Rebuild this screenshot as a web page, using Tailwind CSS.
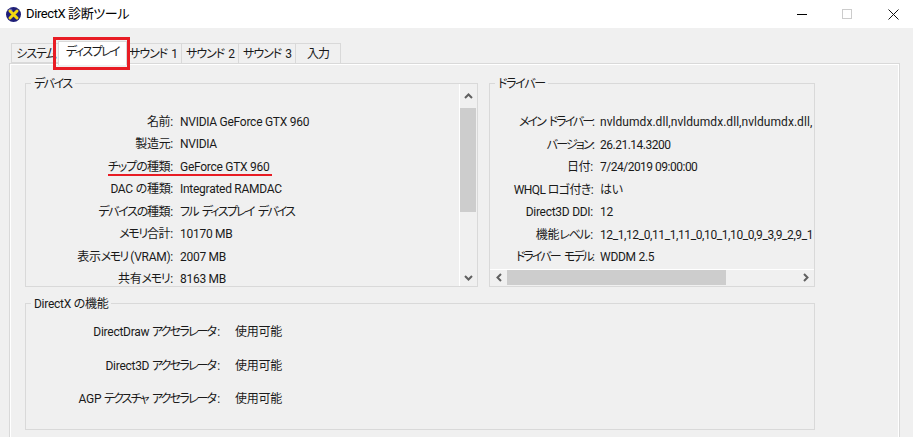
<!DOCTYPE html>
<html lang="ja">
<head>
<meta charset="UTF-8">
<title>DirectX 診断ツール</title>
<script src="https://cdn.jsdelivr.net/npm/@tailwindcss/browser@4"></script>
</head>
<body class="w-[913px] h-[437px] overflow-hidden bg-[#f0f0f0] text-[12px] leading-[16px] tracking-[-0.27px] text-[#1a1a1a] font-['Roboto','Noto_Sans_CJK_JP',sans-serif] [font-feature-settings:'palt']">

<!-- title bar -->
<div class="h-[28px] bg-white flex items-center relative">
  <svg class="ml-[5px] w-[17px] h-[17px]" viewBox="0 0 17 17">
    <circle cx="8.5" cy="8.5" r="7.5" fill="#1f1f78"/>
    <circle cx="5.5" cy="4.5" r="2" fill="#5a5ab8"/>
    <path d="M5 5 L12 12 M12 5 L5 12" stroke="#f2d90f" stroke-width="3" stroke-linecap="round"/>
  </svg>
  <span class="ml-[4px] text-[13px] tracking-[-0.4px] text-black whitespace-nowrap">DirectX 診断ツール</span>
  <div class="ml-auto flex items-center">
    <div class="w-[10px] h-px bg-black mr-[35px]"></div>
    <div class="w-[10px] h-[10px] border border-[#cccccc] mr-[36px]"></div>
    <svg class="w-[11px] h-[11px] mr-[14px]" viewBox="0 0 11 11"><path d="M0.5 0.5 L10.5 10.5 M10.5 0.5 L0.5 10.5" stroke="#111" stroke-width="1"/></svg>
  </div>
</div>

<!-- tabs -->
<div class="h-[35px] pl-[11px] pt-[15px] flex items-start relative whitespace-nowrap tracking-[-1px] [word-spacing:2px]">
  <div class="w-[47px] h-[20px] pt-px pl-[2px] border border-r-0 border-[#d9d9d9] flex items-center justify-center">システム</div>
  <div class="w-[69px] h-[24px] -mt-[2px] pb-[3px] tracking-[-1.6px] bg-white border-x border-t border-[#d9d9d9] flex items-center justify-center relative z-10">ディスプレイ</div>
  <div class="w-[54px] h-[20px] pt-px pr-[2px] border-t border-[#d9d9d9] flex items-center justify-center">サウンド 1</div>
  <div class="w-[57px] h-[20px] pt-px border-t border-l border-[#d9d9d9] flex items-center justify-center">サウンド 2</div>
  <div class="w-[57px] h-[20px] pt-px border-t border-l border-[#d9d9d9] flex items-center justify-center">サウンド 3</div>
  <div class="w-[46px] h-[20px] pt-px border-t border-x border-[#d9d9d9] flex items-center justify-center">入力</div>
  <div class="absolute left-[53px] top-[9px] w-[77px] h-[33px] border-[3px] border-[#e81c24] z-20"></div>
</div>

<!-- tab panel -->
<div class="ml-[9px] w-[891px] h-[374px] border border-[#d9d9d9] border-b-0">
  <div class="h-full border-l border-t border-r border-white pl-[14px] pt-[18px]">

    <div class="flex items-start gap-[11px]">
      <!-- device -->
      <div class="w-[453px] h-[204px] border border-[#d9d9d9] relative">
        <span class="absolute left-[5px] -top-[8px] bg-[#f0f0f0] px-[3px] tracking-[-1.5px]">デバイス</span>
        <div class="h-full flex">
          <div class="flex-1 h-[202px] overflow-hidden pt-[26.5px]">
            <div class="flex h-[22.5px] items-center"><span class="w-[147px] text-right">名前:</span><span class="ml-[7px]">NVIDIA GeForce GTX 960</span></div>
            <div class="flex h-[22.5px] items-center"><span class="w-[147px] text-right">製造元:</span><span class="ml-[7px]">NVIDIA</span></div>
            <div class="flex h-[22.5px] items-center relative"><span class="w-[147px] text-right"><span class="tracking-[-1px]">チップの</span>種類:</span><span class="ml-[7px]">GeForce GTX 960</span>
              <div class="absolute left-[82px] top-[18px] w-[164px] h-[2px] bg-[#e81c24]"></div></div>
            <div class="flex h-[22.5px] items-center"><span class="w-[147px] text-right">DAC の種類:</span><span class="ml-[7px]">Integrated RAMDAC</span></div>
            <div class="flex h-[22.5px] items-center"><span class="w-[147px] text-right"><span class="tracking-[-1.3px]">デバイスの</span>種類:</span><span class="ml-[7px] tracking-[-1.8px] [word-spacing:3px]">フル ディスプレイ デバイス</span></div>
            <div class="flex h-[22.5px] items-center"><span class="w-[147px] text-right"><span class="tracking-[-1.3px]">メモリ</span>合計:</span><span class="ml-[7px]">10170 MB</span></div>
            <div class="flex h-[22.5px] items-center"><span class="w-[147px] text-right">表示<span class="tracking-[-1.6px]">メモリ</span> (VRAM):</span><span class="ml-[7px]">2007 MB</span></div>
            <div class="flex h-[22.5px] items-center"><span class="w-[147px] text-right">共有<span class="tracking-[-1.3px] pr-px">メモリ</span>:</span><span class="ml-[7px]">8163 MB</span></div>
          </div>
          <!-- vertical scrollbar -->
          <div class="w-[17px] mr-px border-l border-white flex flex-col">
            <div class="h-[24px] flex items-center justify-center">
              <svg class="w-[9px] h-[6px]" viewBox="0 0 9 6"><path d="M1 5 L4.5 1.5 L8 5" fill="none" stroke="#606060" stroke-width="2"/></svg>
            </div>
            <div class="h-[104px] bg-[#cdcdcd]"></div>
            <div class="flex-1"></div>
            <div class="h-[17px] flex items-center justify-center">
              <svg class="w-[9px] h-[6px]" viewBox="0 0 9 6"><path d="M1 1 L4.5 4.5 L8 1" fill="none" stroke="#606060" stroke-width="2"/></svg>
            </div>
          </div>
        </div>
      </div>

      <!-- driver -->
      <div class="w-[326px] h-[204px] border border-[#d9d9d9] relative">
        <span class="absolute left-[5px] -top-[8px] bg-[#f0f0f0] px-[3px] tracking-[-1.3px]">ドライバー</span>
        <div class="h-[185px] overflow-hidden pt-[27.2px]">
          <div class="flex h-[22.5px] items-center whitespace-nowrap"><span class="w-[103px] shrink-0 text-right tracking-[-2px] [word-spacing:3px]">メイン ドライバー:</span><span class="ml-[7px] tracking-[0.05px]">nvldumdx.dll,nvldumdx.dll,nvldumdx.dll,</span></div>
          <div class="flex h-[22.5px] items-center whitespace-nowrap"><span class="w-[103px] shrink-0 text-right tracking-[-1.8px]">バージョン:</span><span class="ml-[7px] tracking-[-0.5px]">26.21.14.3200</span></div>
          <div class="flex h-[22.5px] items-center whitespace-nowrap"><span class="w-[103px] shrink-0 text-right">日付:</span><span class="ml-[7px] tracking-[-0.5px]">7/24/2019 09:00:00</span></div>
          <div class="flex h-[22.5px] items-center whitespace-nowrap"><span class="w-[103px] shrink-0 text-right tracking-[-0.6px]">WHQL ロゴ付き:</span><span class="ml-[7px]">はい</span></div>
          <div class="flex h-[22.5px] items-center whitespace-nowrap"><span class="w-[103px] shrink-0 text-right">Direct3D DDI:</span><span class="ml-[7px]">12</span></div>
          <div class="flex h-[22.5px] items-center whitespace-nowrap"><span class="w-[103px] shrink-0 text-right">機能<span class="tracking-[-1.3px] pr-px">レベル</span>:</span><span class="ml-[7px] tracking-[-0.4px]">12_1,12_0,11_1,11_0,10_1,10_0,9_3,9_2,9_1</span></div>
          <div class="flex h-[22.5px] items-center whitespace-nowrap"><span class="w-[103px] shrink-0 text-right tracking-[-1.9px] [word-spacing:3px]">ドライバー モデル:</span><span class="ml-[7px]">WDDM 2.5</span></div>
        </div>
        <!-- horizontal scrollbar -->
        <div class="h-[16px] border-t border-white flex items-stretch">
          <div class="w-[17px] flex items-center justify-center">
            <svg class="w-[6px] h-[9px]" viewBox="0 0 6 9"><path d="M5 1 L1.5 4.5 L5 8" fill="none" stroke="#606060" stroke-width="2"/></svg>
          </div>
          <div class="w-[219px] bg-[#cdcdcd]"></div>
          <div class="flex-1"></div>
          <div class="w-[17px] flex items-center justify-center">
            <svg class="w-[6px] h-[9px]" viewBox="0 0 6 9"><path d="M1 1 L4.5 4.5 L1 8" fill="none" stroke="#606060" stroke-width="2"/></svg>
          </div>
        </div>
      </div>
    </div>

    <!-- directx features -->
    <div class="mt-[16px] w-[790px] h-[127px] border border-[#d9d9d9] relative pt-[19px]">
      <span class="absolute left-[5px] -top-[8px] bg-[#f0f0f0] px-[3px]">DirectX の機能</span>
      <div class="flex h-[17px] items-center"><span class="w-[194px] text-right">DirectDraw <span class="tracking-[-1.8px] pr-[2px]">アクセラレータ</span>:</span><span class="ml-[15px]">使用可能</span></div>
      <div class="flex h-[17px] items-center mt-[17px]"><span class="w-[194px] text-right">Direct3D <span class="tracking-[-1.8px] pr-[2px]">アクセラレータ</span>:</span><span class="ml-[15px]">使用可能</span></div>
      <div class="flex h-[17px] items-center mt-[16px]"><span class="w-[194px] text-right">AGP <span class="tracking-[-1.8px] pr-[2px] [word-spacing:3px]">テクスチャ アクセラレータ</span>:</span><span class="ml-[15px]">使用可能</span></div>
    </div>
  </div>
</div>
</body>
</html>
